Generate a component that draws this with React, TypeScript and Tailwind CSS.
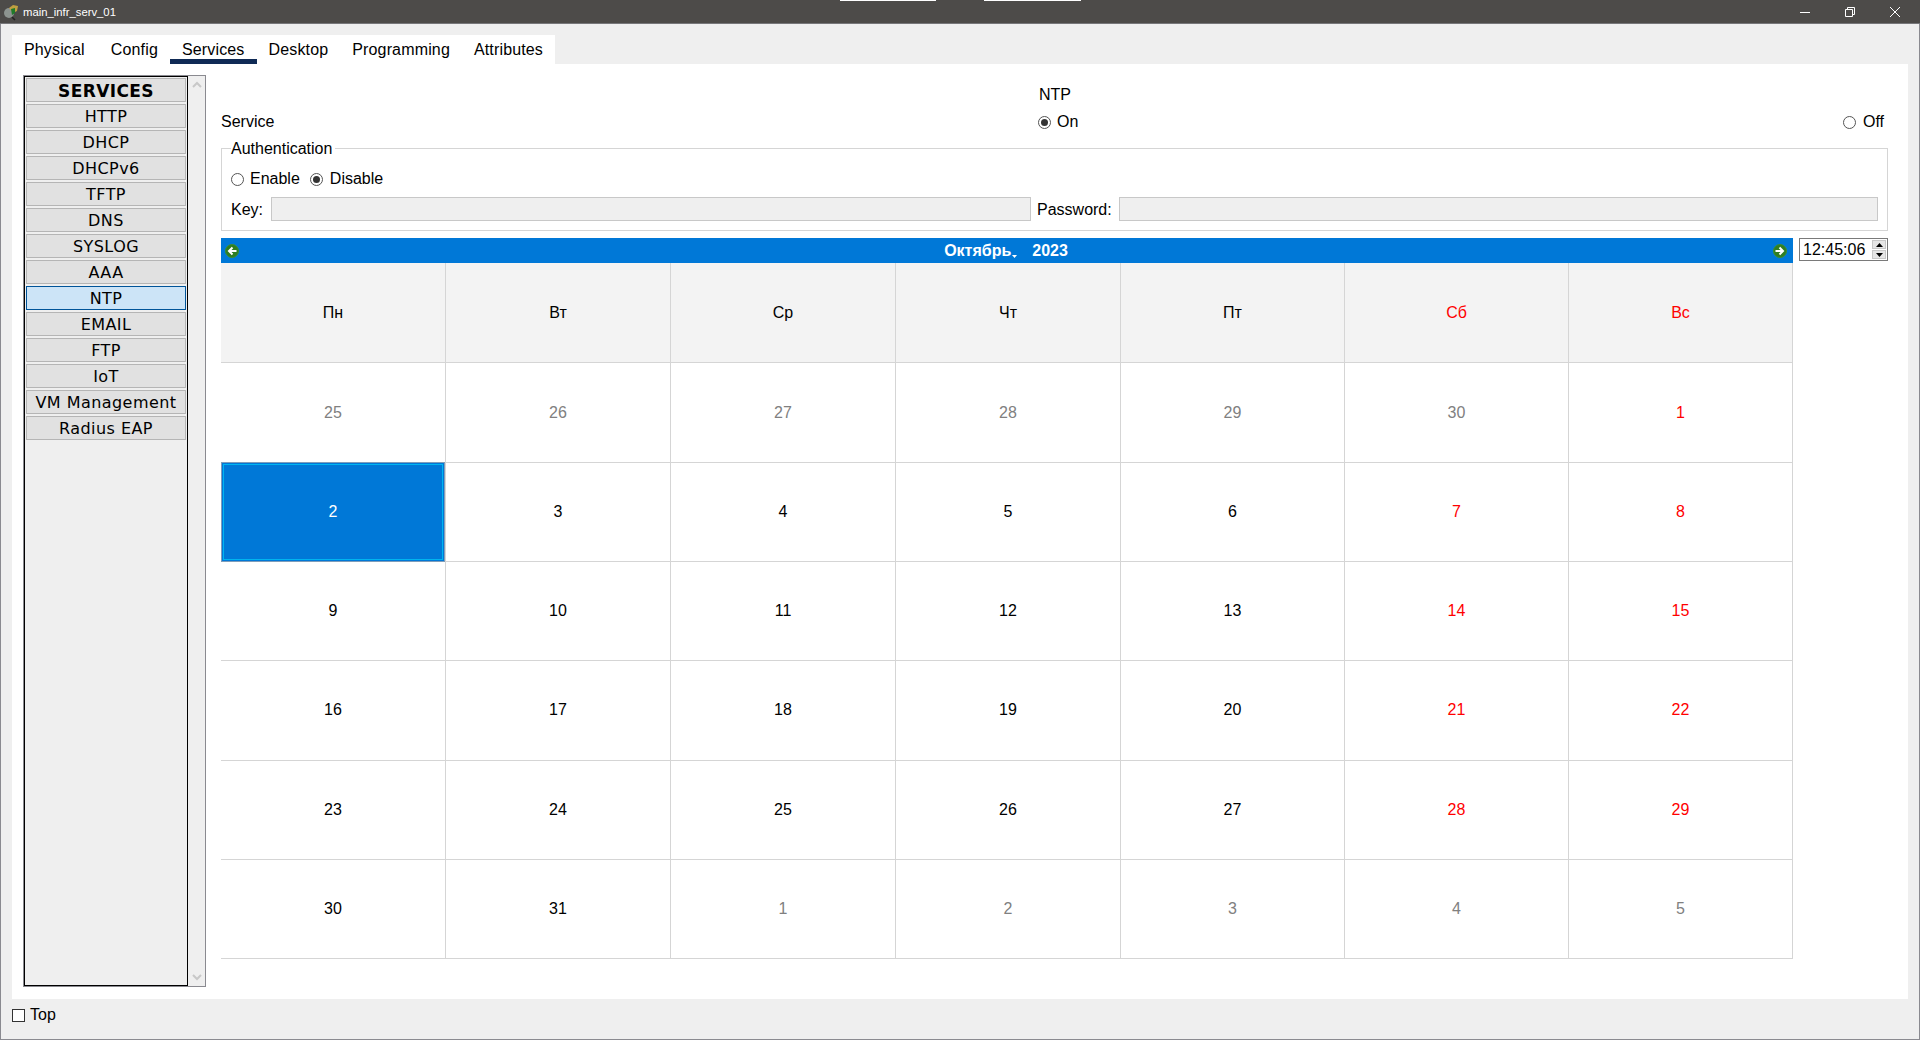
import React from 'react';

const tabs = ['Physical', 'Config', 'Services', 'Desktop', 'Programming', 'Attributes'];
const services = ['HTTP', 'DHCP', 'DHCPv6', 'TFTP', 'DNS', 'SYSLOG', 'AAA', 'NTP', 'EMAIL', 'FTP', 'IoT', 'VM Management', 'Radius EAP'];
const weekDays = ['Пн', 'Вт', 'Ср', 'Чт', 'Пт', 'Сб', 'Вс'];
const days = [
  25, 26, 27, 28, 29, 30, 1,
  2, 3, 4, 5, 6, 7, 8,
  9, 10, 11, 12, 13, 14, 15,
  16, 17, 18, 19, 20, 21, 22,
  23, 24, 25, 26, 27, 28, 29,
  30, 31, 1, 2, 3, 4, 5,
];

function Radio({ checked }: { checked?: boolean }) {
  return (
    <span className="flex h-[13px] w-[13px] items-center justify-center rounded-full border border-[#555] bg-white">
      {checked && <span className="h-[7px] w-[7px] rounded-full bg-[#333]" />}
    </span>
  );
}

function ArrowIcon({ left }: { left?: boolean }) {
  return (
    <svg width="14" height="14" viewBox="0 0 14 14">
      <circle cx="7" cy="7" r="6.5" fill="#2f7d22" stroke="#3d8f30" strokeWidth="1" />
      <path d={left ? 'M11.5 7H5M7.5 3.5L4 7l3.5 3.5' : 'M2.5 7H9M6.5 3.5L10 7l-3.5 3.5'} fill="none" stroke="#fff" strokeWidth="2" />
    </svg>
  );
}

function tabClass(tab: string) {
  if (tab === 'Services') return 'flex items-center border-b-[5px] border-[#0f2a55] px-[12px] pt-[5px]';
  if (tab === 'Physical') return 'flex items-center border-b-[5px] border-transparent pl-[12px] pr-[14px] pt-[5px]';
  return 'flex items-center border-b-[5px] border-transparent px-[12px] pt-[5px]';
}

function cellClass(index: number) {
  const left = index % 7 === 0 ? '' : 'border-l';
  if (index === 7) {
    return 'relative -mt-px h-[100.2px] border border-[#7f9db9] bg-[#0078d7] text-white shadow-[inset_0_0_0_1px_#0078d7,inset_0_0_0_2px_#00b4f0]';
  }
  const height = index < 7 ? 'h-[100px]' : 'h-[99.2px]';
  const muted = index < 6 || index >= 37;
  const color = muted ? 'text-[#808080]' : index % 7 >= 5 ? 'text-[#ff0000]' : 'text-black';
  return `${height} border-b border-[#d5d5d5] ${left} ${color}`;
}

export default function App() {
  return (
    <div className="flex h-[1040px] w-[1920px] flex-col overflow-hidden bg-[#efefef] font-['Liberation_Sans',sans-serif] text-[16px] leading-[20px] text-black">
      {/* window title */}
      <div className="relative flex h-[24px] shrink-0 items-center border-b border-[#77777a] bg-[#4d4b49] pl-[2px] text-white">
        <svg width="18" height="18" viewBox="0 0 18 18">
          <circle cx="7" cy="10" r="5" fill="#8d9490" />
          <path d="M10 14l3 3" stroke="#222" strokeWidth="1.5" />
          <path d="M7 5l4-3 5 1-1 5-4 2z" fill="#c0a040" />
          <path d="M9 6l4-1v5l-3 2z" fill="#1f7a2a" />
        </svg>
        <span className="ml-[3px] text-[11.3px]">main_infr_serv_01</span>
        <span className="absolute left-[840px] top-0 h-px w-[96px] bg-white" />
        <span className="absolute left-[984px] top-0 h-px w-[97px] bg-white" />
        <div className="ml-auto flex items-center gap-[35px] pr-[20px]">
          <svg width="10" height="10" viewBox="0 0 10 10" stroke="#fff"><path d="M0 5.5h10" /></svg>
          <svg width="10" height="10" viewBox="0 0 10 10" fill="none" stroke="#fff">
            <path d="M.5 2.5h7v7h-7zM2.5 2.5v-2h7v7h-2" />
          </svg>
          <svg width="10" height="10" viewBox="0 0 10 10" stroke="#fff"><path d="M0 0l10 10M10 0L0 10" /></svg>
        </div>
      </div>

      <div className="flex min-h-0 flex-1 flex-col border-x border-b border-[#8a8a90] px-[11px]">
        {/* tabs */}
        <div className="mt-[11px] flex h-[29px] w-[543px] shrink-0 items-stretch bg-white tracking-[0.15px]">
          {tabs.map((tab) => (
            <div key={tab} className={tabClass(tab)}>
              {tab}
            </div>
          ))}
        </div>

        <div className="flex h-[935px] shrink-0 bg-white pl-[11px] pt-[11px]">
          {/* services list */}
          <div className="flex h-[912px] w-[183px] shrink-0 border border-[#8a8a90]">
            <div className="flex w-[164px] shrink-0 flex-col gap-[2px] border border-black bg-[#efefef] px-[1px] pt-[1px] font-['DejaVu_Sans',sans-serif] text-[16px] tracking-[0.45px]">
              <div className="flex h-[24px] shrink-0 items-center justify-center border border-[#b5b5b5] bg-[#e1e1e1] pt-[2px] text-[17px] font-bold tracking-[0.4px]">SERVICES</div>
              {services.map((name) => (
                <div
                  key={name}
                  className={
                    name === 'NTP'
                      ? 'flex h-[24px] shrink-0 items-center justify-center border border-[#005499] bg-[#cce4f7] pt-[2px]'
                      : 'flex h-[24px] shrink-0 items-center justify-center border border-[#b5b5b5] bg-[#e1e1e1] pt-[2px]'
                  }
                >
                  {name}
                </div>
              ))}
            </div>
            <div className="flex flex-1 flex-col items-center justify-between bg-[#efefef] py-[5px]">
              <svg width="10" height="7" viewBox="0 0 10 7" fill="none" stroke="#c8c8c8" strokeWidth="2"><path d="M1 6l4-4 4 4" /></svg>
              <svg width="10" height="7" viewBox="0 0 10 7" fill="none" stroke="#c8c8c8" strokeWidth="2"><path d="M1 1l4 4 4-4" /></svg>
            </div>
          </div>

          {/* NTP panel */}
          <div className="ml-[15px] flex min-w-0 flex-1 flex-col pr-[20px]">
            <div className="mt-[10px] h-[20px] pl-[818px]">NTP</div>
            <div className="mt-[7px] flex h-[20px] items-center">
              <span className="w-[817px]">Service</span>
              <span className="flex items-center gap-[6px]"><Radio checked />On</span>
              <span className="ml-auto mr-[4px] flex items-center gap-[7px]"><Radio />Off</span>
            </div>

            <fieldset className="mt-[6px] h-[93px] border border-[#d5d5d5] px-[9px]">
              <legend className="box-border h-[20px] pr-[3px] pt-[1px] text-[16px] leading-[20px]">Authentication</legend>
              <div className="mt-[11px] flex h-[20px] items-center">
                <span className="flex items-center gap-[6px]"><Radio />Enable</span>
                <span className="ml-[10px] flex items-center gap-[7px]"><Radio checked />Disable</span>
              </div>
              <div className="mt-[8px] flex h-[24px] items-center">
                <span className="pt-[2px]">Key:</span>
                <span className="ml-[8px] h-[24px] w-[760px] border border-[#c8c8c8] bg-[#efefef]" />
                <span className="ml-[6px] pt-[2px]">Password:</span>
                <span className="ml-[7px] h-[24px] flex-1 border border-[#c8c8c8] bg-[#efefef]" />
              </div>
            </fieldset>

            {/* calendar */}
            <div className="mt-[7px] flex items-start">
              <div className="w-[1572px] shrink-0">
                <div className="flex h-[25px] items-center justify-between bg-[#0078d7] pl-[4px] pr-[6px] font-bold text-white">
                  <ArrowIcon left />
                  <span className="flex items-center">
                    Октябрь
                    <svg className="ml-[1px] mr-[15px] mt-[12px]" width="5" height="3" viewBox="0 0 5 3"><path d="M0 0h5L2.5 3z" fill="#fff" /></svg>
                    2023
                  </span>
                  <ArrowIcon />
                </div>
                <div className="grid grid-cols-[224px_225px_225px_225px_224px_224px_1fr] border-r border-[#d5d5d5]">
                  {weekDays.map((day, i) => (
                    <div
                      key={day}
                      className={`flex h-[100px] items-center justify-center border-b border-[#d5d5d5] bg-[#f3f3f3] ${i > 0 ? 'border-l' : ''} ${i >= 5 ? 'text-[#ff0000]' : ''}`}
                    >
                      {day}
                    </div>
                  ))}
                  {days.map((day, i) => (
                    <div key={i} className={`flex items-center justify-center ${cellClass(i)}`}>
                      {day}
                    </div>
                  ))}
                </div>
              </div>
              <div className="ml-[6px] flex h-[23px] flex-1 items-center border border-[#7a7a7a] pl-[3px] pr-[1px]">
                <span className="flex-1">12:45:06</span>
                <div className="flex h-[19px] w-[14px] flex-col gap-px">
                  <span className="flex flex-1 items-center justify-center border border-[#c8c8c8] bg-[#e6e6e6]">
                    <svg width="7" height="4" viewBox="0 0 7 4"><path d="M3.5 0L7 4H0z" fill="#000" /></svg>
                  </span>
                  <span className="flex flex-1 items-center justify-center border border-[#c8c8c8] bg-[#e6e6e6]">
                    <svg width="7" height="4" viewBox="0 0 7 4"><path d="M0 0h7L3.5 4z" fill="#000" /></svg>
                  </span>
                </div>
              </div>
            </div>
          </div>
        </div>

        {/* footer */}
        <div className="flex h-[40px] items-center gap-[5px] pb-[8px]">
          <span className="h-[13px] w-[13px] border border-[#333] bg-white" />
          Top
        </div>
      </div>
    </div>
  );
}
